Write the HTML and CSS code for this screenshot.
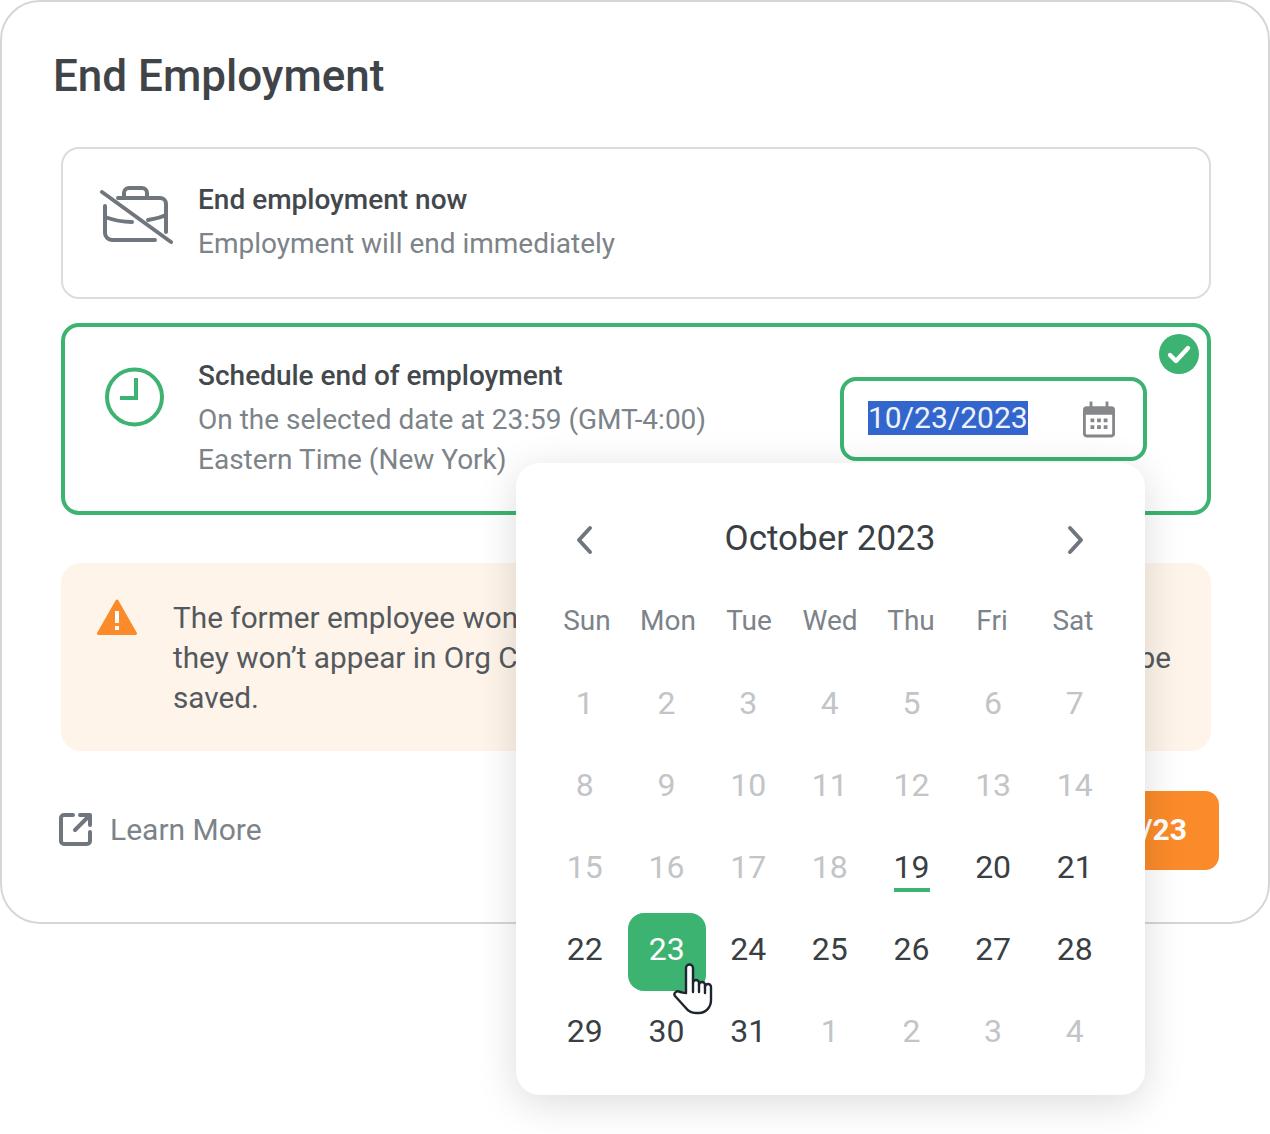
FILE: index.html
```html
<!DOCTYPE html>
<html lang="en">
<head>
    <meta charset="UTF-8">
    <meta name="viewport" content="width=device-width, initial-scale=1.0">
    <title>End Employment</title>
    <link rel="stylesheet" href="styles.css">
</head>
<body>
    <div class="card">
        <h1 class="title">End Employment</h1>

        <div class="option">
            <svg class="option-icon" width="74" height="60" viewBox="0 0 74 60" fill="none" stroke="#6f767e" stroke-width="4" stroke-linecap="round" stroke-linejoin="round">
                <path d="M25 12V8a5 5 0 0 1 5-5h13a5 5 0 0 1 5 5v4"/>
                <path d="M19 13h42a6 6 0 0 1 6 6v28"/>
                <path d="M6 21v27a7 7 0 0 0 7 7h43"/>
                <path d="M6 32c8 3 17 5 27 5M49 35c6-1 12-2 18-5"/>
                <path d="M3 7l69 50"/>
            </svg>
            <div class="option-text">
                <div class="option-name">End employment now</div>
                <div class="option-desc">Employment will end immediately</div>
            </div>
        </div>

        <div class="option option-active">
            <svg class="option-icon clock" width="62" height="62" viewBox="0 0 62 62" fill="none" stroke="#3cb371" stroke-width="4">
                <circle cx="30.500" cy="31" r="27.500"/>
                <path d="M32 12v20H16"/>
            </svg>
            <div class="option-text">
                <div class="option-name">Schedule end of employment</div>
                <div class="option-desc">On the selected date at 23:59 (GMT-4:00)<br>Eastern Time (New York)</div>
            </div>
            <div class="date-input">
                <span class="date-value">10/23/2023</span>
                <svg width="32" height="37" viewBox="0 0 34 38" fill="#85878a">
                    <path d="M7 0h3v5h14V0h3v5h3a4 4 0 0 1 4 4v25a4 4 0 0 1-4 4H4a4 4 0 0 1-4-4V9a4 4 0 0 1 4-4h3zM3 14v20a1 1 0 0 0 1 1h26a1 1 0 0 0 1-1V14z"/>
                    <path d="M8 18h4v4H8zM15 18h4v4h-4zM22 18h4v4h-4zM8 25h4v4H8zM15 25h4v4h-4zM22 25h4v4h-4z"/>
                </svg>
            </div>
            <svg class="check" width="40" height="40" viewBox="0 0 40 40">
                <circle cx="20" cy="20" r="20" fill="#3cb371"/>
                <path d="M11 21l6 6 12-13" fill="none" stroke="#fff" stroke-width="4.4" stroke-linecap="round" stroke-linejoin="round"/>
            </svg>
        </div>

        <div class="alert">
            <svg class="alert-icon" width="40" height="37" viewBox="0 0 40 37">
                <path d="M20 2L38.500 34.500H1.500z" fill="#fb8b2a" stroke="#fb8b2a" stroke-width="3" stroke-linejoin="round"/>
                <path d="M18 12h4v12h-4zM18 27h4v4h-4z" fill="#fff"/>
            </svg>
            <p class="alert-text">The former employee won’t have access to the platform anymore and<br>they won’t appear in Org Chart. However, all of their information will soon be<br>saved.</p>
        </div>

        <div class="footer">
            <a class="learn-more">
                <svg width="33" height="33" viewBox="0 0 33 33" fill="none" stroke="#6f767e" stroke-width="4" stroke-linecap="round" stroke-linejoin="round">
                    <path d="M14 2H5a3 3 0 0 0-3 3v23a3 3 0 0 0 3 3h23a3 3 0 0 0 3-3v-9"/>
                    <path d="M16 17L30 3M21 2h10v10"/>
                </svg>
                Learn More
            </a>
            <button class="end-btn">End on 10/23/23</button>
        </div>

        <div class="calendar">
            <div class="cal-head">
                <svg width="20" height="30" viewBox="0 0 20 30" fill="none" stroke="#6f767e" stroke-width="4" stroke-linecap="round" stroke-linejoin="round"><path d="M15 3L4 15l11 12"/></svg>
                <span class="cal-month">October 2023</span>
                <svg width="20" height="30" viewBox="0 0 20 30" fill="none" stroke="#6f767e" stroke-width="4" stroke-linecap="round" stroke-linejoin="round"><path d="M5 3l11 12L5 27"/></svg>
            </div>
            <div class="cal-weeks">
                <div>Sun</div><div>Mon</div><div>Tue</div><div>Wed</div><div>Thu</div><div>Fri</div><div>Sat</div>
            </div>
            <div class="cal-grid">
                <div class="day off">1</div><div class="day off">2</div><div class="day off">3</div><div class="day off">4</div><div class="day off">5</div><div class="day off">6</div><div class="day off">7</div>
                <div class="day off">8</div><div class="day off">9</div><div class="day off">10</div><div class="day off">11</div><div class="day off">12</div><div class="day off">13</div><div class="day off">14</div>
                <div class="day off">15</div><div class="day off">16</div><div class="day off">17</div><div class="day off">18</div><div class="day today">19</div><div class="day">20</div><div class="day">21</div>
                <div class="day">22</div><div class="day selected">23</div><div class="day">24</div><div class="day">25</div><div class="day">26</div><div class="day">27</div><div class="day">28</div>
                <div class="day">29</div><div class="day">30</div><div class="day">31</div><div class="day off">1</div><div class="day off">2</div><div class="day off">3</div><div class="day off">4</div>
            </div>
        </div>

        <svg class="cursor" width="42" height="52" viewBox="0 0 42 52" fill="#fff" stroke="#1f2530" stroke-width="2.400" stroke-linejoin="round" stroke-linecap="round">
            <path d="M14 30V5a3.500 3.500 0 0 1 7 0v15a3 3 0 0 1 6 0v2a3 3 0 0 1 6 0v2a3 3 0 0 1 6 0v13c0 7-5 13-12 13h-3c-5 0-8-2-11-6L3 33c-2-3 2-6 5-4z"/>
            <path d="M21 20v9M27 22v7M33 24v6" fill="none"/>
        </svg>
    </div>
</body>
</html>
```

FILE: styles.css
```css
* {
    box-sizing: border-box;
}

body {
    min-height: 1134px;
    margin: 0;
    background-color: #fff;
    font-family: Roboto, "Liberation Sans", sans-serif;
    color: #3f4448;
}

.card {
    position: relative;
    width: 1270px;
    height: 924px;
    padding: 0 49px 0 57px;
    border: 2px solid #d6d6d6;
    border-radius: 40px;
    background-color: #fff;
}

.title {
    margin: 48px 0 45px -6px;
    font-size: 44px;
    line-height: 52px;
    font-weight: 500;
    color: #3f4448;
}

.option {
    position: relative;
    display: flex;
    align-items: flex-start;
    width: 1150px;
    height: 152px;
    margin: 0 0 24px 2px;
    padding: 36px 36px 0 36px;
    border: 2px solid #dcdcdc;
    border-radius: 18px;
}

.option-icon {
    flex: none;
    margin-right: 25px;
}

.option-name {
    font-size: 28px;
    line-height: 30px;
    font-weight: 500;
    color: #43484d;
}

.option-desc {
    margin-top: 9px;
    font-size: 28px;
    line-height: 40px;
    color: #7c8389;
}

.option-active {
    height: 192px;
    padding: 34px 60px 0 39px;
    border: 4px solid #3cb371;
}

.clock {
    margin-top: 5px;
    margin-right: 32px;
}

.date-input {
    position: absolute;
    top: 50px;
    right: 60px;
    display: flex;
    align-items: center;
    justify-content: space-between;
    width: 307px;
    height: 84px;
    padding: 0 28px 0 24px;
    border: 4px solid #3cb371;
    border-radius: 16px;
    background-color: #fff;
}

.date-value {
    margin-top: -2px;
    font-size: 30px;
    line-height: 34px;
    background-color: #3366cc;
    color: #eef2fb;
}

.check {
    position: absolute;
    top: 7px;
    right: 8px;
}

.alert {
    display: flex;
    width: 1150px;
    height: 188px;
    margin: 48px 0 0 2px;
    padding: 35px 0 0 36px;
    border-radius: 20px;
    background-color: #fef4e9;
}

.alert-icon {
    flex: none;
    margin: 1px 36px 0 0;
}

.alert-text {
    margin: 0;
    font-size: 29.75px;
    line-height: 40px;
    color: #54595e;
    white-space: nowrap;
}

.footer {
    display: flex;
    align-items: center;
    justify-content: space-between;
    margin-top: 40px;
}

.learn-more {
    display: flex;
    align-items: center;
    gap: 18px;
    margin-top: -3px;
    font-size: 30px;
    color: #7c8389;
}

.end-btn {
    height: 79px;
    padding: 0 32px 2px;
    border: none;
    border-radius: 14px;
    background-color: #fb8b2a;
    color: #fff;
    font-family: inherit;
    font-size: 30px;
    font-weight: 700;
}

.calendar {
    position: absolute;
    top: 461px;
    left: 514px;
    width: 629px;
    height: 632px;
    padding: 46px 27px 0 28px;
    border-radius: 24px;
    background-color: #fff;
    box-shadow: 0 8px 40px rgba(0, 0, 0, 0.14);
}

.cal-head {
    display: flex;
    align-items: center;
    justify-content: space-between;
    height: 62px;
    padding: 0 33px 0 31px;
}

.cal-month {
    margin-top: -4px;
    font-size: 35px;
    color: #3a3f44;
}

.cal-weeks {
    display: grid;
    grid-template-columns: repeat(7, 81px);
    height: 91px;
    padding: 33px 0 0 2.5px;
    text-align: center;
    font-size: 28px;
    line-height: 34px;
    color: #7c8389;
}

.cal-grid {
    display: grid;
    grid-template-columns: repeat(7, 81.67px);
    grid-auto-rows: 82px;
}

.day {
    position: relative;
    display: flex;
    align-items: center;
    justify-content: center;
    font-size: 32px;
    color: #3a3f44;
}

.off {
    color: #c2c5c8;
}

.today::after {
    content: "";
    position: absolute;
    left: 23px;
    bottom: 16px;
    width: 36px;
    height: 4px;
    background-color: #3cb371;
}

.selected {
    margin: 5px 1.5px -1px 2px;
    padding-bottom: 6px;
    border-radius: 16px;
    background-color: #3cb371;
    color: #fff;
}

.cursor {
    position: absolute;
    top: 961px;
    left: 670px;
}
```
